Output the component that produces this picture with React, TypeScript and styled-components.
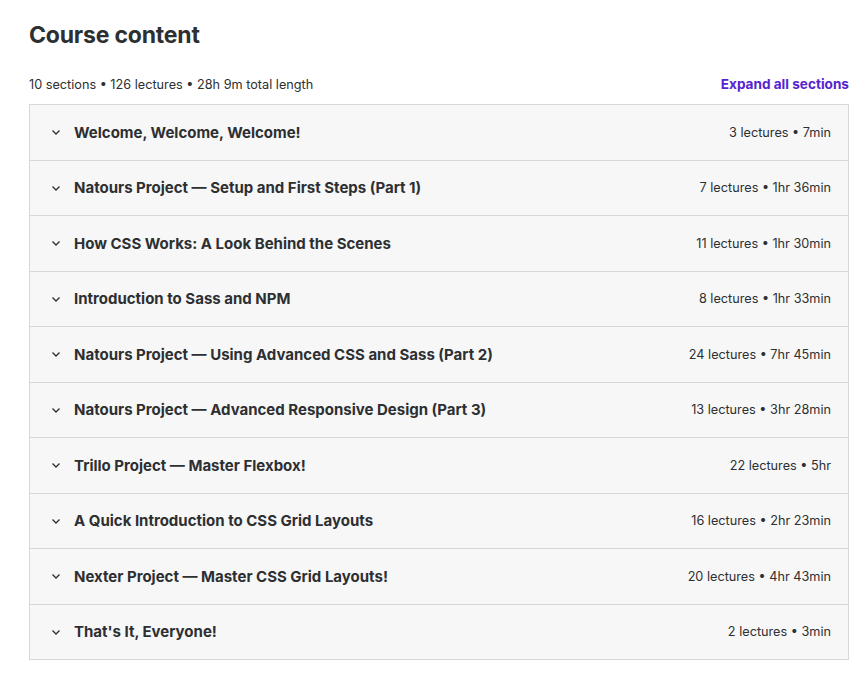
import React from "react";
import styled, { createGlobalStyle } from "styled-components";

const Global = createGlobalStyle`
  html, body { margin: 0; padding: 0; background: #ffffff; }
  body { font-family: Inter, "Noto Sans", sans-serif; color: #2d2f31; }
`;

const Page = styled.div`
  width: 820px;
  padding: 21px 0 0 29px;
  box-sizing: content-box;
`;

const Title = styled.h2`
  margin: 0;
  font-size: 23px;
  line-height: 29px;
  font-weight: 700;
  color: #2d2f31;
  letter-spacing: -0.2px;
`;

const MetaRow = styled.div`
  display: flex;
  justify-content: space-between;
  align-items: center;
  margin-top: 24px;
  height: 20px;
  margin-bottom: 10px;
`;

const Meta = styled.span`
  font-size: 12.7px;
  color: #2d2f31;
`;

const ExpandLink = styled.button`
  background: none;
  border: 0;
  padding: 0;
  font-family: inherit;
  font-size: 13.6px;
  font-weight: 700;
  color: #5624d0;
  cursor: pointer;
`;

const List = styled.div`
  border: 1px solid #d6d7d9;
  border-bottom: 0;
  width: 818px;
`;

const Row = styled.div`
  display: flex;
  align-items: center;
  height: 54.5px;
  padding: 0 17px 0 20px;
  background: #f7f7f8;
  border-bottom: 1px solid #d6d7d9;
`;

const Chevron = styled.svg`
  width: 12px;
  height: 12px;
  flex: none;
  margin-right: 12px;
`;

const SectionTitle = styled.span`
  flex: 1;
  font-size: 15px;
  font-weight: 700;
  color: #2d2f31;
`;

const SectionMeta = styled.span`
  font-size: 12.7px;
  color: #2d2f31;
`;

const sections: [string, string][] = [
  ["Welcome, Welcome, Welcome!", "3 lectures • 7min"],
  ["Natours Project — Setup and First Steps (Part 1)", "7 lectures • 1hr 36min"],
  ["How CSS Works: A Look Behind the Scenes", "11 lectures • 1hr 30min"],
  ["Introduction to Sass and NPM", "8 lectures • 1hr 33min"],
  ["Natours Project — Using Advanced CSS and Sass (Part 2)", "24 lectures • 7hr 45min"],
  ["Natours Project — Advanced Responsive Design (Part 3)", "13 lectures • 3hr 28min"],
  ["Trillo Project — Master Flexbox!", "22 lectures • 5hr"],
  ["A Quick Introduction to CSS Grid Layouts", "16 lectures • 2hr 23min"],
  ["Nexter Project — Master CSS Grid Layouts!", "20 lectures • 4hr 43min"],
  ["That's It, Everyone!", "2 lectures • 3min"],
];

export default function App() {
  return (
    <>
      <Global />
      <Page>
        <Title>Course content</Title>
        <MetaRow>
          <Meta>10 sections • 126 lectures • 28h 9m total length</Meta>
          <ExpandLink>Expand all sections</ExpandLink>
        </MetaRow>
        <List>
          {sections.map(([t, m]) => (
            <Row key={t}>
              <Chevron viewBox="0 0 12 12">
                <polyline points="2.5,4.5 6,8 9.5,4.5" fill="none" stroke="#2d2f31" strokeWidth="1.3" />
              </Chevron>
              <SectionTitle>{t}</SectionTitle>
              <SectionMeta>{m}</SectionMeta>
            </Row>
          ))}
        </List>
      </Page>
    </>
  );
}
